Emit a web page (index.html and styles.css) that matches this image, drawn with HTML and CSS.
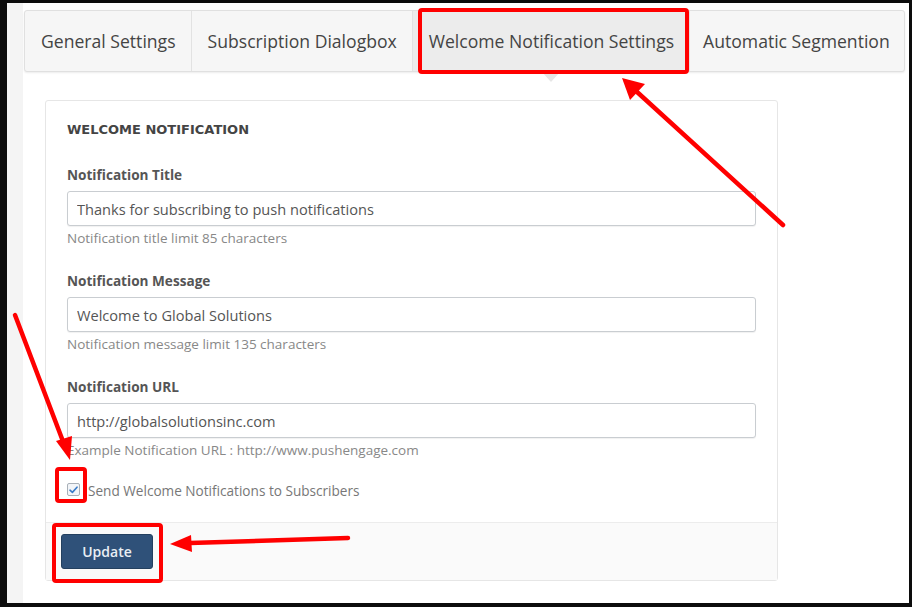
FILE: index.html
```html
<!DOCTYPE html>
<html lang="en">
<head>
    <meta charset="UTF-8">
    <meta name="viewport" content="width=device-width, initial-scale=1.0">
    <title>Welcome Notification Settings</title>
    <link rel="stylesheet" href="styles.css">
</head>
<body>
    <div class="page">
        <div class="side-strip"></div>

        <div class="content">
            <!-- Settings tabs -->
            <ul class="tabs">
                <li class="tab">General Settings</li>
                <li class="tab">Subscription Dialogbox</li>
                <li class="tab active">Welcome Notification Settings</li>
                <li class="tab">Automatic Segmention</li>
            </ul>

            <form class="card">
                <div class="card-body">
                    <h3 class="card-title">WELCOME NOTIFICATION</h3>

                    <div class="form-group">
                        <label for="notifTitle">Notification Title</label>
                        <input type="text" id="notifTitle" value="Thanks for subscribing to push notifications">
                        <p class="help">Notification title limit 85 characters</p>
                    </div>

                    <div class="form-group">
                        <label for="notifMessage">Notification Message</label>
                        <input type="text" id="notifMessage" value="Welcome to Global Solutions">
                        <p class="help">Notification message limit 135 characters</p>
                    </div>

                    <div class="form-group">
                        <label for="notifUrl">Notification URL</label>
                        <input type="text" id="notifUrl" value="http://globalsolutionsinc.com">
                        <p class="help">Example Notification URL : http://www.pushengage.com</p>
                    </div>

                    <div class="check-row">
                        <span class="check-box">
                            <svg width="9" height="8" viewBox="0 0 9 8"><path d="M1 4.2 L3.4 6.4 L8 1.2" fill="none" stroke="#3a7bc8" stroke-width="1.6" stroke-linecap="round" stroke-linejoin="round"/></svg>
                        </span>
                        <span class="check-label">Send Welcome Notifications to Subscribers</span>
                    </div>
                </div>

                <div class="card-footer">
                    <button type="submit" class="btn-update">Update</button>
                </div>
            </form>
        </div>
    </div>

    <!-- Annotation marks drawn over the screenshot -->
    <svg class="annotations" width="912" height="607" viewBox="0 0 912 607">
        <g fill="none" stroke="#ff0000" stroke-width="4">
            <rect x="420" y="10" width="267" height="62" rx="2"/>
            <rect x="57" y="469" width="28" height="32" rx="2"/>
            <rect x="54" y="525" width="107" height="56" rx="2"/>
        </g>
        <g stroke="#ff0000" stroke-width="4.5" stroke-linecap="round">
            <line x1="783" y1="225" x2="636" y2="91"/>
            <line x1="15" y1="315" x2="64" y2="444"/>
            <line x1="348" y1="538" x2="190" y2="543"/>
        </g>
        <g fill="#ff0000">
            <polygon points="622,78 645,84 630,100"/>
            <polygon points="70,460 56,441 72,436"/>
            <polygon points="170,544 191,535 192,552"/>
        </g>
    </svg>
</body>
</html>
```

FILE: styles.css
```css
body {
    margin: 0;
    background-color: #0c0c0c;
    padding: 3px 3px 4px 7px;
    font-family: 'Open Sans', 'Liberation Sans', sans-serif;
    position: relative;
}

.page {
    display: flex;
    height: 600px;
    background-color: #fff;
}

.side-strip {
    width: 16px;
    flex-shrink: 0;
    background-color: #f4f4f4;
}

.content {
    flex: 1;
    min-width: 0;
    padding: 7px 4px 0 1px;
}

/* Tabs */
.tabs {
    display: flex;
    list-style: none;
    margin: 0;
    padding: 0;
    height: 62px;
    overflow: hidden;
    box-sizing: border-box;
    background-color: #f6f6f6;
    border: 1px solid #e0e0e0;
    border-radius: 3px;
    box-shadow: 0 1px 2px rgba(0, 0, 0, 0.08);
}

.tab {
    display: flex;
    align-items: center;
    flex-shrink: 0;
    white-space: nowrap;
    padding: 0 15px 0 16px;
    font-size: 17.6px;
    color: #444;
    border-right: 1px solid #e2e2e2;
    position: relative;
}

.tab:last-child {
    border-right: none;
    flex: 1;
    padding-left: 13px;
}

.tab.active {
    background-color: #ececec;
    overflow: visible;
}

/* Card */
.card {
    width: 733px;
    margin: 28px 0 0 21px;
    box-sizing: border-box;
    border: 1px solid #e6e6e6;
    border-radius: 3px;
    background-color: #fff;
    position: relative;
}

/* little pointer under the selected tab */
.card::before {
    content: "";
    position: absolute;
    left: 496px;
    top: -29px;
    border-left: 9px solid transparent;
    border-right: 9px solid transparent;
    border-top: 10px solid #e6e6e6;
}

.card-body {
    padding: 19px 21px 22px 21px;
}

.card-title {
    margin: 0 0 26px 0;
    font-family: 'DejaVu Sans', sans-serif;
    font-size: 13px;
    line-height: 20px;
    font-weight: bold;
    color: #444;
}

.form-group {
    margin-bottom: 25px;
}

.form-group label {
    display: block;
    font-size: 13.6px;
    line-height: 18px;
    font-weight: bold;
    color: #555;
    margin-bottom: 7px;
}

.form-group input {
    display: block;
    width: 100%;
    height: 35px;
    box-sizing: border-box;
    padding: 0 9px;
    border: 1px solid #c9cdd1;
    border-radius: 3px;
    box-shadow: 0 1px 1px rgba(0, 0, 0, 0.06);
    font-family: 'Open Sans', sans-serif;
    font-size: 14.6px;
    color: #555;
}

.help {
    margin: 3px 0 0 0;
    font-size: 13.5px;
    line-height: 18px;
    color: #888;
}

.check-row {
    display: flex;
    align-items: center;
    gap: 8px;
    margin-top: -5px;
}

.check-box {
    display: flex;
    align-items: center;
    justify-content: center;
    width: 13px;
    height: 13px;
    box-sizing: border-box;
    border: 1px solid #a9b0b8;
    border-radius: 2px;
    background-color: #f3f5f8;
}

.check-label {
    font-size: 13.6px;
    line-height: 18px;
    color: #777;
    margin-top: 3px;
}

.card-footer {
    padding: 11px 15px 11px 15px;
    background-color: #fafafa;
    border-top: 1px solid #ececec;
}

.btn-update {
    width: 92px;
    height: 35px;
    background-color: #2f5179;
    color: #e9eef4;
    border: 1px solid #24405f;
    border-radius: 3px;
    font-family: 'Open Sans', sans-serif;
    font-size: 14px;
    font-weight: 600;
    cursor: pointer;
}

.annotations {
    position: absolute;
    left: 0;
    top: 0;
    pointer-events: none;
}
```
